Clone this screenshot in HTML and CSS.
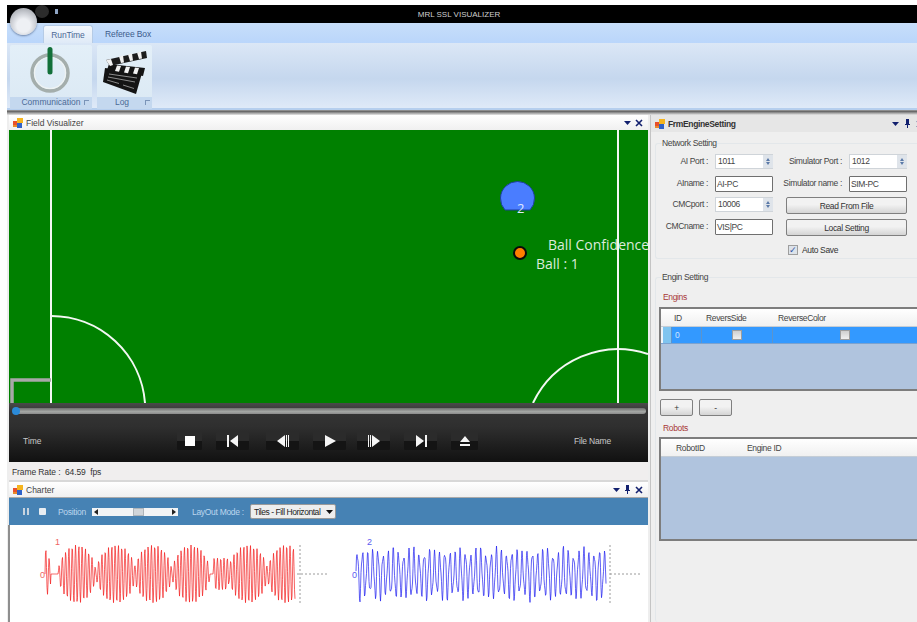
FILE: index.html
```html
<!DOCTYPE html>
<html lang="en">
<head>
<meta charset="utf-8">
<title>MRL SSL VISUALIZER</title>
<link rel="stylesheet" href="styles.css">
</head>
<body>
<svg class="defs" width="0" height="0" aria-hidden="true">
  <symbol id="form-icon" viewBox="0 0 10 10">
    <rect x="0" y="3" width="4" height="4" fill="#e8502a"/>
    <rect x="4" y="0" width="6" height="5" fill="#f5b41e"/>
    <rect x="4" y="5" width="5" height="5" fill="#2f62c8"/>
    <rect x="0" y="7" width="4" height="2" fill="#e88a2a"/>
  </symbol>
  <symbol id="dock-arrow" viewBox="0 0 7 7"><path d="M0 2h7L3.500 6z" fill="#12206e"/></symbol>
  <symbol id="dock-pin" viewBox="0 0 7 9"><path d="M2 0h3v5h1v1H4v3H3V6H1V5h1z" fill="#12206e"/></symbol>
  <symbol id="dock-close" viewBox="0 0 8 8"><path d="M1 1l6 6M7 1L1 7" stroke="#12206e" stroke-width="1.600"/></symbol>
</svg>

<div class="window">
  <div class="orb"></div>
  <div class="orb-shadow"></div>
  <div class="quick-tick"></div>

  <header class="titlebar">MRL SSL VISUALIZER</header>

  <nav class="tabs">
    <span class="tab tab-active">RunTime</span>
    <span class="tab">Referee Box</span>
  </nav>

  <section class="ribbon">
    <div class="group group-comm">
      <div class="group-body">
        <svg width="44" height="50" viewBox="0 0 44 50">
          <circle cx="21" cy="28" r="18" fill="none" stroke="#a4aeac" stroke-width="3.500"/>
          <circle cx="21" cy="28" r="15.500" fill="none" stroke="#eef3f3" stroke-width="1.200"/>
          <path d="M21 4.500V27" stroke="#13703a" stroke-width="5" stroke-linecap="round"/>
        </svg>
      </div>
      <div class="group-label"><span>Communication</span><i class="launcher"></i></div>
    </div>
    <div class="group group-log">
      <div class="group-body">
        <svg width="46" height="50" viewBox="0 0 46 50">
          <path d="M3 23 40 28 34 49 1 37z" fill="#141414"/>
          <path d="M7 19 43 23 41 31 5 25z" fill="#141414"/>
          <path d="M15 20.500l-2 5.500 4 .7 2-5.700zM24 21.500l-2 6 4 .7 2-6.200zM33 22.500l-2 6 4 .7 2-6.200z" fill="#f2f2f2"/>
          <path d="M4 15 44 6 45 13 8 21z" fill="#1c1c1c"/>
          <path d="M4 15l5-1 2 6-3 1zM17 11.500l4-1 1 7-3 .6zM26 9.500l4-1 1 7-3 .6zM35 7.500l4-1 1 7-3 .6z" fill="#f2f2f2"/>
          <path d="M7 29l28 4M6 32l27 5M5 35l12 3.500M21 40l11 3.500" stroke="#8a8a8a" stroke-width="1"/>
        </svg>
      </div>
      <div class="group-label"><span>Log</span><i class="launcher"></i></div>
    </div>
  </section>
  <div class="ribbon-shadow"></div>

  <main class="workspace">
    <div class="column-left">
      <div class="panel-title">
        <svg class="form-icon"><use href="#form-icon"/></svg>
        <span class="panel-name">Field Visualizer</span>
        <span class="dock-buttons">
          <svg class="dock-a"><use href="#dock-arrow"/></svg>
          <svg class="dock-c"><use href="#dock-close"/></svg>
        </span>
      </div>

      <svg class="field" width="639" height="273" viewBox="0 0 639 273">
        <rect width="639" height="273" fill="#008000"/>
        <path d="M42 0V273M609 0V273" stroke="#f4f8f4" stroke-width="2" fill="none"/>
        <path d="M42 186A94 94 0 0 1 136 273" stroke="#f4f8f4" stroke-width="2" fill="none"/>
        <path d="M524 273A94 94 0 0 1 639 224" stroke="#f4f8f4" stroke-width="2" fill="none"/>
        <path d="M3 273V250H42" stroke="#a8a8a8" stroke-width="3.500" fill="none"/>
        <path d="M496 78A17 17 0 1 1 521 78Z" transform="translate(0 2)" fill="#4a7dff" stroke="#1d3f9e" stroke-width="1"/>
        <text class="robot-id" x="508" y="83">2</text>
        <circle cx="511" cy="123" r="6" fill="#ff7f00" stroke="#0a0a0a" stroke-width="2"/>
        <text class="field-text" x="539" y="120">Ball Confidence</text>
        <text class="field-text" x="527" y="139">Ball : 1</text>
      </svg>

      <section class="player">
        <div class="seek"><i class="seek-thumb"></i></div>
        <div class="transport">
          <span class="time">Time</span>
          <div class="transport-buttons">
            <button class="tbtn tbtn-stop"><svg width="12" height="12"><rect x="1" y="1" width="10" height="10" fill="#fff"/></svg></button>
            <button class="tbtn"><svg width="14" height="12"><path d="M1 0h2v12H1zM12 0v12L4 6z" fill="#f4f4f4"/></svg></button>
            <button class="tbtn tbtn-step-back"><svg width="14" height="12"><path d="M9 0v12L1 6zM10 0h1v12h-1zM12 0h1v12h-1z" fill="#f4f4f4"/></svg></button>
            <button class="tbtn"><svg width="14" height="12"><path d="M2 0l11 6-11 6z" fill="#f4f4f4"/></svg></button>
            <button class="tbtn tbtn-step-fwd"><svg width="14" height="12"><path d="M1 0h1v12H1zM3 0h1v12H3zM5 0l8 6-8 6z" fill="#f4f4f4"/></svg></button>
            <button class="tbtn"><svg width="14" height="12"><path d="M2 0l8 6-8 6zM11 0h2v12h-2z" fill="#f4f4f4"/></svg></button>
            <button class="tbtn tbtn-eject"><svg width="12" height="12"><path d="M6 1l5 6H1zM1 9h10v2H1z" fill="#f4f4f4"/></svg></button>
          </div>
          <span class="file-name">File Name</span>
        </div>
      </section>

      <div class="frame-rate">Frame Rate :&nbsp; 64.59&nbsp; fps</div>

      <div class="panel-title panel-title-charter">
        <svg class="form-icon"><use href="#form-icon"/></svg>
        <span class="panel-name">Charter</span>
        <span class="dock-buttons">
          <svg class="dock-a"><use href="#dock-arrow"/></svg>
          <svg class="dock-p"><use href="#dock-pin"/></svg>
          <svg class="dock-c"><use href="#dock-close"/></svg>
        </span>
      </div>

      <div class="chart-tools">
        <span class="pause"><i></i><i></i></span>
        <span class="stop"></span>
        <span class="tool-label tool-position">Position</span>
        <span class="hscroll">
          <svg width="5" height="6"><path d="M4 0v6L0 3z" fill="#222"/></svg>
          <i class="hscroll-thumb"></i>
          <svg width="5" height="6"><path d="M1 0v6l4-3z" fill="#222"/></svg>
        </span>
        <span class="tool-label tool-layout">LayOut Mode :</span>
        <span class="combo">Tiles - Fill Horizontal<svg width="7" height="4"><path d="M0 0h7L3.500 4z" fill="#111"/></svg></span>
      </div>

      <div class="chart-area">
        <svg id="charts" width="638" height="97" viewBox="0 0 638 97">
          <path d="M288 49H318M291 20V78" stroke="#9a9a9a" stroke-width="1" stroke-dasharray="2 2" fill="none"/>
          <path d="M601 49H631M601 20V78" stroke="#9a9a9a" stroke-width="1" stroke-dasharray="2 2" fill="none"/>
          <text class="chart-label chart-red" x="46" y="20">1</text>
          <text class="chart-label chart-red" x="31" y="53">0</text>
          <text class="chart-label chart-blue" x="358" y="20">2</text>
          <text class="chart-label chart-blue" x="343" y="53">0</text>
        </svg>
      </div>
    </div>

    <aside class="settings">
      <div class="panel-title panel-title-settings">
        <svg class="form-icon"><use href="#form-icon"/></svg>
        <span class="panel-name">FrmEngineSetting</span>
        <span class="dock-buttons">
          <svg class="dock-a"><use href="#dock-arrow"/></svg>
          <svg class="dock-p"><use href="#dock-pin"/></svg>
          <svg class="dock-c"><use href="#dock-close"/></svg>
        </span>
      </div>

      <fieldset class="group-box network">
        <legend>Network Setting</legend>
        <div class="form-grid">
          <label class="field-label">AI Port :</label>
          <span class="spinner"><span>1011</span><i class="spin"></i></span>
          <label class="field-label">Simulator Port :</label>
          <span class="spinner"><span>1012</span><i class="spin"></i></span>

          <label class="field-label">AIname :</label>
          <span class="textbox">AI-PC</span>
          <label class="field-label">Simulator name :</label>
          <span class="textbox">SIM-PC</span>

          <label class="field-label">CMCport :</label>
          <span class="spinner"><span>10006</span><i class="spin"></i></span>
          <button class="win-button form-button">Read From File</button>

          <label class="field-label">CMCname :</label>
          <span class="textbox">VIS|PC</span>
          <button class="win-button form-button">Local Setting</button>

          <span class="auto-save"><i class="check check-on">✓</i>Auto Save</span>
        </div>
      </fieldset>

      <fieldset class="group-box engine">
        <legend>Engin Setting</legend>
        <div class="red-label">Engins</div>
        <div class="data-grid grid-engines">
          <div class="grid-head">
            <span class="cell-corner"></span>
            <span class="col-id">ID</span>
            <span class="col-side">ReversSide</span>
            <span class="col-color">ReverseColor</span>
          </div>
          <div class="grid-row">
            <span class="cell-corner row-marker"></span>
            <span class="col-id">0</span>
            <span class="col-side cell-center"><i class="check"></i></span>
            <span class="col-color cell-center"><i class="check"></i></span>
          </div>
        </div>
        <div class="grid-actions">
          <button class="win-button small-button">+</button>
          <button class="win-button small-button">-</button>
        </div>
        <div class="red-label red-label-robots">Robots</div>
        <div class="data-grid grid-robots">
          <div class="grid-head">
            <span class="cell-corner"></span>
            <span class="col-robot">RobotID</span>
            <span class="col-engine">Engine ID</span>
          </div>
        </div>
      </fieldset>
    </aside>
  </main>
</div>
<script src="charts.js"></script>
</body>
</html>
```
FILE: styles.css
```css
* { box-sizing: border-box; }

html, body {
  margin: 0;
  height: 622px;
  overflow: hidden;
  background: #fff;
  font-family: "Liberation Sans", Arial, sans-serif;
  font-size: 8.500px;
  color: #333;
}

.defs { position: absolute; }

.window {
  position: relative;
  margin: 5px 0 0 7px;
  height: 617px;
  display: flex;
  flex-direction: column;
  background: #eee;
}

/* Application orb and quick access strip */
.orb {
  position: absolute;
  left: 3px;
  top: 3px;
  width: 27px;
  height: 27px;
  border-radius: 50%;
  background: radial-gradient(circle at 50% 65%, #eef0f4 0 30%, #c6c9cf 60%, #8d9096 100%);
  box-shadow: 0 1px 2px rgba(30, 50, 90, .5);
  z-index: 2;
}
.orb-shadow {
  position: absolute;
  left: 28px;
  top: 0;
  width: 14px;
  height: 13px;
  border-radius: 50%;
  background: #2b2b2b;
}
.quick-tick {
  position: absolute;
  left: 48px;
  top: 4px;
  width: 3px;
  height: 5px;
  background: #8fa5c4;
}

.titlebar {
  height: 18px;
  padding-right: 6px;
  background: #000;
  color: #cfcfcf;
  font-size: 8px;
  line-height: 20px;
  text-align: center;
}

.tabs {
  height: 20px;
  display: flex;
  align-items: flex-end;
  padding-left: 36px;
  background: linear-gradient(#c7defa, #bad6fb);
  gap: 1px;
}
.tab {
  height: 18px;
  padding: 4px 11px 0;
  color: #3c5b8c;
  line-height: 10px;
  width: 60px;
  white-space: nowrap;
  letter-spacing: -.1px;
}
.tab-active {
  width: 50px;
  padding: 4px 0 0;
  text-align: center;
  background: linear-gradient(#f4f8fd, #dfeaf7);
  border: 1px solid #b5cbe6;
  border-bottom: 0;
  border-radius: 3px 3px 0 0;
  color: #4c6a96;
}

.ribbon {
  height: 67px;
  display: flex;
  gap: 5px;
  padding: 2px 0 2px 3px;
  background: linear-gradient(#dbe7f6, #c5d7ee 55%, #dfeaf8);
  border-bottom: 2px solid #b6cfee;
}
.group {
  display: flex;
  flex-direction: column;
  border-radius: 2px;
  background: linear-gradient(#e3eff8, #dbe9f4);
}
.group-comm { width: 82px; }
.group-log { width: 55px; }
.group-body {
  flex: 1;
  display: flex;
  align-items: center;
  justify-content: center;
  padding-bottom: 2px;
}
.group-label {
  height: 12px;
  padding-bottom: 2px;
  display: flex;
  align-items: center;
  justify-content: center;
  gap: 3px;
  padding-left: 8px;
  background: #c4d8ef;
  color: #4c6a96;
}
.group-log .group-label { gap: 16px; padding-left: 16px; }
.launcher {
  width: 5px;
  height: 5px;
  border-top: 1px solid #7a94b8;
  border-left: 1px solid #7a94b8;
}

.ribbon-shadow {
  height: 5px;
  background: linear-gradient(#a0a0a0, #6a6a6a 30%, #e6e6e6);
}

.workspace {
  flex: 1;
  min-height: 0;
  display: flex;
  padding-left: 2px;
}
.column-left {
  width: 639px;
  display: flex;
  flex-direction: column;
}

.panel-title {
  height: 15px;
  display: flex;
  align-items: center;
  gap: 3px;
  padding: 0 4px;
  background: linear-gradient(#fff, #f0f0f0);
  color: #444;
  flex: none;
}
.panel-title-charter {
  height: 18px;
  border-top: 2px solid #d8d8d8;
  border-bottom: 1px solid #aaa;
}
.panel-title-settings {
  height: 17px;
  background: #e6e6e6;
  font-weight: bold;
  color: #333;
}
.form-icon { width: 10px; height: 10px; flex: none; }
.dock-buttons {
  margin-left: auto;
  display: flex;
  align-items: center;
  gap: 4px;
  padding-right: 1px;
}
.dock-a { width: 7px; height: 7px; }
.dock-p { width: 7px; height: 9px; }
.dock-c { width: 8px; height: 8px; }

.field { display: block; flex: none; }
.field-text {
  font-family: "Open Sans", sans-serif;
  font-size: 14px;
  fill: #dcebdc;
}
.robot-id {
  font-family: "Open Sans", sans-serif;
  font-size: 13px;
  fill: #dfe8ff;
}

.player {
  height: 59px;
  flex: none;
  padding-top: 5px;
  background: linear-gradient(#4a4a4a, #343434 15%, #2f2f2f 40%, #111);
}
.seek {
  position: relative;
  margin: 0 2px 0 5px;
  height: 6px;
  border-radius: 3px;
  background: linear-gradient(#6f6f6f, #a5a8a5 60%, #8a8a8a);
}
.seek-thumb {
  position: absolute;
  left: -2px;
  top: -1px;
  width: 8px;
  height: 8px;
  border-radius: 50%;
  background: #2b8ad8;
}
.transport {
  height: 48px;
  padding: 5px 0 0 14px;
  display: flex;
  align-items: center;
  color: #c9c9c9;
}
.time { width: 154px; }
.transport-buttons {
  display: flex;
  align-items: center;
  gap: 14px;
}
.tbtn {
  height: 18px;
  width: 33px;
  padding: 0;
  border: 0;
  border-radius: 1px;
  display: flex;
  align-items: center;
  justify-content: center;
  background: linear-gradient(#2b2b2b 50%, #141414 50%);
}
.tbtn-stop { width: 25px; }
.tbtn-eject { width: 27px; }
.tbtn-step-back { margin-left: 3px; }
.tbtn-step-fwd { margin-left: -3px; }
.file-name { margin-left: 96px; letter-spacing: -.2px; }

.frame-rate {
  height: 18px;
  flex: none;
  padding: 2px 0 0 3px;
  line-height: 16px;
  background: #f0eeee;
  color: #333;
  letter-spacing: -.1px;
}

.chart-tools {
  height: 27px;
  flex: none;
  display: flex;
  align-items: center;
  background: #4682b4;
  color: #bcd6ee;
  letter-spacing: -.3px;
}
.pause { display: flex; gap: 2px; margin-left: 14px; }
.pause i { width: 2px; height: 7px; background: #c7d3df; }
.stop {
  width: 7px;
  height: 7px;
  margin-left: 10px;
  background: #e8edf2;
  border-radius: 1px;
}
.tool-position { margin-left: 12px; width: 34px; }
.hscroll {
  width: 86px;
  height: 8px;
  display: flex;
  align-items: center;
  justify-content: space-between;
  padding: 0 2px;
  position: relative;
  background: #f2f4f6;
}
.hscroll-thumb {
  position: absolute;
  left: 41px;
  top: 0;
  width: 11px;
  height: 8px;
  background: #d0d5da;
  border: 1px solid #aeb4ba;
}
.tool-layout { margin-left: 14px; width: 58px; white-space: nowrap; }
.combo {
  width: 86px;
  height: 15px;
  display: flex;
  align-items: center;
  justify-content: space-between;
  padding: 0 2px 0 3px;
  background: #eee;
  border: 1px solid #9a9a9a;
  border-radius: 2px;
  color: #222;
  white-space: nowrap;
  letter-spacing: -.45px;
}

.chart-area {
  flex: 1;
  min-height: 0;
  background: #fff;
  border-left: 2px solid #8e8e8e;
  margin-left: -1px;
}
#charts { display: block; margin-left: -1px; }
.chart-label { font-family: "Liberation Sans", sans-serif; font-size: 9px; }
.chart-red { fill: #f06464; }
.chart-blue { fill: #5a5af0; }

/* Engine settings panel */
.settings {
  flex: 1;
  min-width: 0;
  display: flex;
  flex-direction: column;
  margin-left: 2px;
  border-left: 1px solid #c4c4c4;
  background: #efefef;
  overflow: hidden;
  letter-spacing: -.35px;
}
.panel-title-settings .dock-buttons { margin-right: -12px; gap: 5px; }

.group-box {
  margin: 0 0 0 4px;
  padding: 0;
  border: 1px solid #e3e7ea;
  border-right: 0;
  border-radius: 3px 0 0 3px;
}
.group-box legend {
  margin-left: 6px;
  padding: 0;
  line-height: 10px;
  color: #444;
  white-space: nowrap;
}
.network { height: 121px; margin-top: 6px; }
.engine { flex: 1; margin-top: 13px; border-bottom: 0; }

.form-grid {
  display: grid;
  grid-template-columns: 47px 58px 62px 58px;
  grid-template-rows: 22px 21px 22px 23px 18px;
  column-gap: 7px;
  padding: 6px 0 0 5px;
}
.field-label {
  padding-top: 2px;
  text-align: right;
  white-space: nowrap;
  color: #444;
}
.spinner {
  height: 15px;
  display: flex;
  background: #fff;
  border: 1px solid #cfd4d9;
  color: #444;
  line-height: 13px;
  padding-left: 2px;
}
.spinner span { flex: 1; }
.spin {
  width: 10px;
  margin: 0 -1px 0 0;
  position: relative;
  background: #dfe4ea;
}
.spin::before, .spin::after {
  content: "";
  position: absolute;
  left: 3px;
  border-left: 2.500px solid transparent;
  border-right: 2.500px solid transparent;
}
.spin::before { top: 3px; border-bottom: 3px solid #5b7aa8; }
.spin::after { bottom: 3px; border-top: 3px solid #5b7aa8; }
.textbox {
  height: 16px;
  padding-left: 1px;
  line-height: 14px;
  background: #fff;
  border: 1px solid #6f6f6f;
  border-radius: 1px;
  color: #444;
}
.win-button {
  font: inherit;
  letter-spacing: inherit;
  color: #333;
  padding: 0;
  background: linear-gradient(#f2f2f2 45%, #d4d4d4);
  border: 1px solid #7f7f7f;
  border-radius: 2px;
}
.form-button {
  grid-column: 3 / 5;
  height: 17px;
  margin-left: 6px;
}
.auto-save {
  grid-column: 3 / 5;
  margin: 2px 0 0 8px;
  display: flex;
  align-items: center;
  gap: 4px;
  height: 11px;
}
.check {
  width: 10px;
  height: 10px;
  display: inline-block;
  background: linear-gradient(#cfcfcf, #f0f0f0);
  border: 1px solid #9e9e9e;
  font-style: normal;
}
.check-on {
  background: #dde3ea;
  color: #2f4fa0;
  font-size: 9px;
  line-height: 8px;
  text-align: center;
}

.red-label {
  margin: 10px 0 0 7px;
  height: 15px;
  line-height: 11px;
  color: #a83838;
}
.red-label-robots { margin-top: 7px; height: 14px; line-height: 10px; }

.data-grid {
  margin-left: 3px;
  background: #b0c4de;
  border: 2px solid #7d7d7d;
  border-right: 0;
}
.grid-engines { height: 84px; }
.grid-robots { height: 104px; }
.grid-head, .grid-row { display: flex; }
.grid-head {
  height: 18px;
  align-items: center;
  background: linear-gradient(#fff, #f0f0f0);
  color: #444;
  border-bottom: 1px solid #c4cdd6;
}
.grid-row {
  height: 17px;
  align-items: center;
  background: #3399ff;
  color: #cfe6ff;
  border-bottom: 1px solid #7ba2cf;
}
.grid-row > span { height: 100%; display: flex; align-items: center; border-left: 1px solid #5b94cc; }
.cell-corner { width: 10px; flex: none; }
.grid-row > .row-marker {
  border-left: 0;
  background: linear-gradient(90deg, #eef4fa 0 2px, #7fc4ef 2px);
}
.col-id { width: 30px; padding-left: 3px; }
.col-side { width: 71px; padding-left: 5px; }
.col-color { flex: 1; padding-left: 6px; }
.col-robot { width: 71px; padding-left: 5px; }
.col-engine { flex: 1; padding-left: 5px; }
.grid-row > .cell-center { justify-content: center; padding: 0; }
.grid-row > .col-color.cell-center { justify-content: flex-start; padding-left: 67px; }

.grid-actions {
  display: flex;
  gap: 6px;
  padding: 8px 0 0 4px;
}
.small-button { width: 33px; height: 17px; }
```
FILE: charts.js
```javascript
// Builds the two sample traces in the charter area.
(function () {
  var svg = document.getElementById('charts');
  var NS = 'http://www.w3.org/2000/svg';
  var MID = 49;

  function trace(color, x0, x1, sampler) {
    var pts = [];
    for (var x = x0; x <= x1; x += 0.5) {
      pts.push(x.toFixed(1) + ',' + (MID - sampler(x - x0)).toFixed(1));
    }
    var line = document.createElementNS(NS, 'polyline');
    line.setAttribute('points', pts.join(' '));
    line.setAttribute('fill', 'none');
    line.setAttribute('stroke', color);
    line.setAttribute('stroke-width', '1');
    line.setAttribute('stroke-opacity', '0.7');
    svg.appendChild(line);
  }

  // Beating signal: six lobes, the gap before the fifth one wider than the rest.
  var lobes = [[32, 19], [71, 20], [108, 19], [146, 19], [203, 20], [241, 19]];
  function envelope(t) {
    var e = t < 6 ? 0.95 - t * 0.1 : 0;
    lobes.forEach(function (l) {
      var d = (t - l[0]) / l[1];
      if (Math.abs(d) < 1) e = Math.max(e, Math.pow(Math.cos(d * Math.PI / 2), 0.5));
    });
    if (t > 168 && t < 184) e = Math.max(e, 0.55);
    return e;
  }

  trace('#f21c1c', 36, 286, function (t) {
    return 29 * envelope(t) * Math.sin(t * 2 * Math.PI / 3.3);
  });

  // Fast carrier with a slight drift in height and a filler harmonic.
  trace('#1c1cf0', 347, 597, function (t) {
    var a = Math.sin(t * 2 * Math.PI / 5.15);
    var b = Math.sin(t * 2 * Math.PI / 2.3 + 0.6);
    var drift = 0.9 + 0.1 * Math.sin(t * 2 * Math.PI / 17);
    return 29 * drift * (0.8 * a + 0.2 * b);
  });
})();
```
